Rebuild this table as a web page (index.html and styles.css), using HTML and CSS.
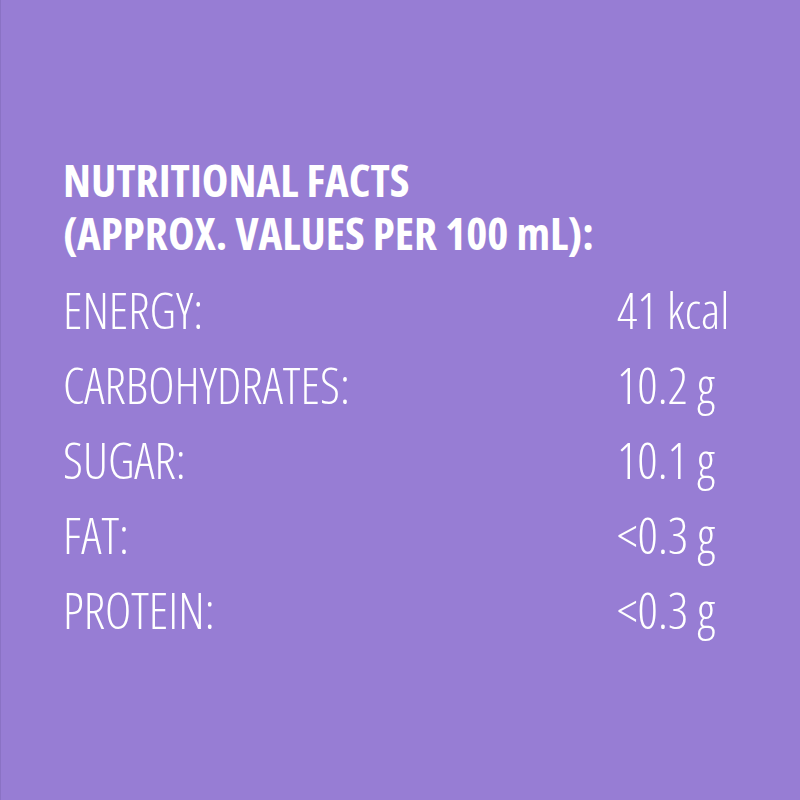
FILE: index.html
```
<!DOCTYPE html>
<html lang="en">
<head>
<meta charset="utf-8">
<title>Nutritional Facts</title>
<link rel="stylesheet" href="styles.css">
</head>
<body>
<main class="panel">
  <h1 class="title"><span class="title-line">NUTRITIONAL FACTS</span><span class="title-line">(APPROX. VALUES PER 100 mL):</span></h1>
  <dl class="facts">
    <dt>ENERGY:</dt><dd>41 kcal</dd>
    <dt>CARBOHYDRATES:</dt><dd>10.2 g</dd>
    <dt>SUGAR:</dt><dd>10.1 g</dd>
    <dt>FAT:</dt><dd>&lt;0.3 g</dd>
    <dt>PROTEIN:</dt><dd>&lt;0.3 g</dd>
  </dl>
</main>
</body>
</html>
```
FILE: styles.css
```
html, body {
  margin: 0;
  padding: 0;
  background: #977dd4;
}
.panel {
  box-sizing: border-box;
  width: 800px;
  height: 800px;
  padding: 153px 0 0 62px;
  border-left: 1px solid #8a72c4;
  color: #ffffff;
  font-family: "Open Sans", "DejaVu Sans", sans-serif;
  font-stretch: 75%;
}
.title {
  margin: 0;
  font-size: 45px;
  line-height: 53px;
  font-weight: 700;
}
.title-line {
  display: block;
  height: 53px;
}
.facts {
  margin: 14px 0 0 0;
  display: grid;
  grid-template-columns: 554px auto;
  font-size: 50px;
  line-height: 75px;
  font-weight: 350;
}
.facts dt, .facts dd {
  margin: 0;
}
```
